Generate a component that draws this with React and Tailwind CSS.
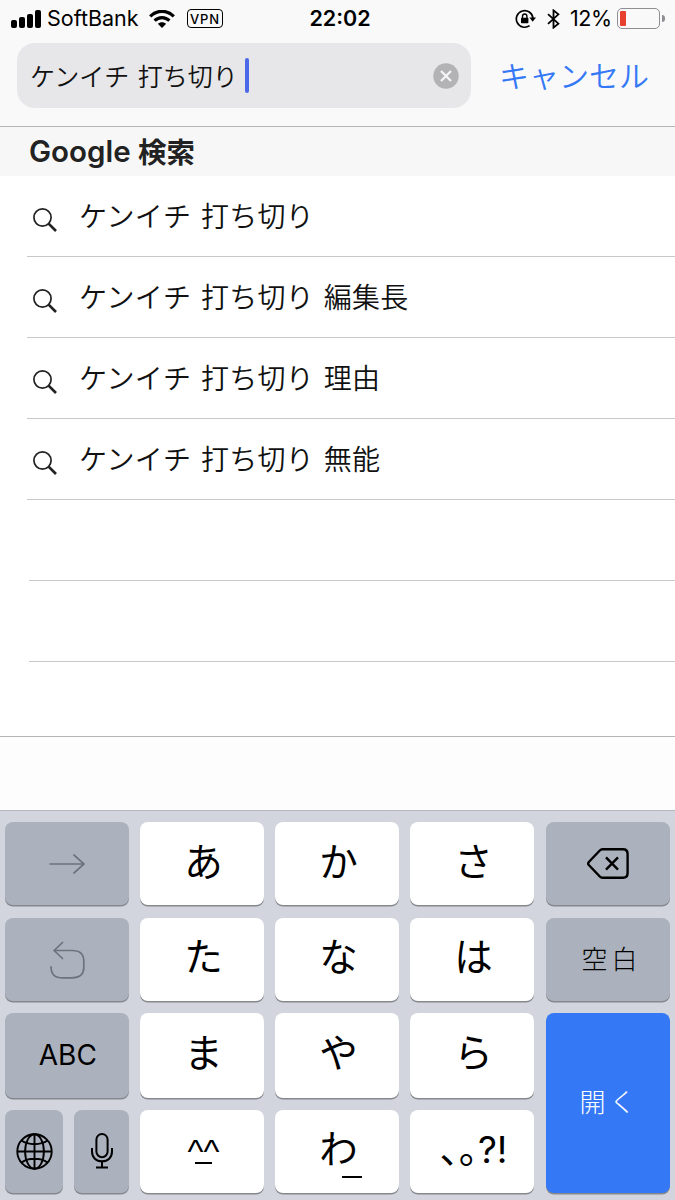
import React from 'react';
import { clsx } from 'clsx';

const suggestions = [
    'ケンイチ 打ち切り',
    'ケンイチ 打ち切り 編集長',
    'ケンイチ 打ち切り 理由',
    'ケンイチ 打ち切り 無能',
];

const signalBars = ['h-2', 'h-[11px]', 'h-[14px]', 'h-[18px]'];

const SearchIcon = () => (
    <svg className="h-6 w-6 shrink-0" viewBox="0 0 24 24" fill="none" stroke="#222">
        <circle cx="9.5" cy="9.5" r="8.6" strokeWidth="1.7" />
        <path d="M15.6 15.6L23 23" strokeWidth="2.7" />
    </svg>
);

const WifiIcon = () => (
    <svg className="h-[18px] w-[26px]" viewBox="0 0 26 18" fill="none" stroke="#000" strokeWidth="3.2">
        <path d="M1.2 6.3C8 -0.4 18 -0.4 24.8 6.3" />
        <path d="M5.6 10.6C9.8 6.5 16.2 6.5 20.4 10.6" />
        <path d="M13 18L8.8 13.8C11.2 11.6 14.8 11.6 17.2 13.8Z" fill="#000" stroke="none" />
    </svg>
);

const RotationLockIcon = () => (
    <svg className="h-5 w-[21px]" viewBox="0 0 21 20" fill="none" stroke="#000" strokeWidth="1.7">
        <path d="M14.6 16.6A8.3 8.3 0 1 1 17.9 9" />
        <path d="M14.4 8.6H21L17.7 12.8Z" fill="#000" stroke="none" />
        <rect x="6" y="8.8" width="7.4" height="5.4" rx="0.8" fill="#000" stroke="none" />
        <path d="M7.5 9V7.2a2.2 2.2 0 0 1 4.4 0V9" strokeWidth="1.4" />
    </svg>
);

const BluetoothIcon = () => (
    <svg className="h-5 w-[13px]" viewBox="0 0 13 20" fill="none" stroke="#000" strokeWidth="1.8">
        <path d="M1 5.2L11.4 14.6L6.5 18.6V1.4L11.4 5.4L1 14.8" />
    </svg>
);

const ArrowIcon = () => (
    <svg className="h-5 w-9" viewBox="0 0 36 20" fill="none" stroke="#6d737d" strokeWidth="1.7">
        <path d="M0.5 10H35M24.5 0.5L35 10L24.5 19.5" />
    </svg>
);

const UndoIcon = () => (
    <svg className="h-[38px] w-[35px]" viewBox="0 0 35 38" fill="none" stroke="#6d737d" strokeWidth="1.7">
        <path d="M13 1L4.2 9.5L13 18" />
        <path d="M4.2 9.5H22C30 9.5 33.8 13.5 33.8 20V26.5C33.8 33 30 36.8 22 36.8H13C5 36.8 1 34 1 25.2" />
    </svg>
);

const DeleteIcon = () => (
    <svg className="h-[31px] w-[42px]" viewBox="0 0 42 31" fill="none" stroke="#000" strokeWidth="2.4" strokeLinejoin="round">
        <path d="M15.5 1.3H36Q40.6 1.3 40.6 6V25Q40.6 29.7 36 29.7H15.5Q13.9 29.7 12.8 28.5L1.8 17Q0.6 15.5 1.8 14L12.8 2.5Q13.9 1.3 15.5 1.3Z" />
        <path d="M19 9.3L31 21.7M31 9.3L19 21.7" />
    </svg>
);

const GlobeIcon = () => (
    <svg className="h-[37px] w-[37px]" viewBox="0 0 37 37" fill="none" stroke="#000" strokeWidth="1.9">
        <circle cx="18.5" cy="18.5" r="17.2" />
        <ellipse cx="18.5" cy="18.5" rx="9.4" ry="17.2" />
        <path d="M18.5 1V36M1 18.5H36M5.6 7.6C12 12.4 25 12.4 31.4 7.6M5.6 29.4C12 24.6 25 24.6 31.4 29.4" />
    </svg>
);

const MicIcon = () => (
    <svg className="h-9 w-[22px]" viewBox="0 0 22 36" fill="none" stroke="#000" strokeWidth="2">
        <rect x="5.4" y="1" width="11.2" height="23.2" rx="5.6" />
        <path d="M1 15V18.5C1 24.7 5.2 28.3 11 28.3S21 24.7 21 18.5V15M11 28.3V34M5 34.4H17" />
    </svg>
);

const Key = ({ variant = 'light', className, children }) => (
    <button
        className={clsx(
            'flex items-center justify-center rounded-lg shadow-[0_1.5px_0_#85888d]',
            variant === 'light' && 'bg-white pb-2 pl-0.5 text-[38.5px]',
            variant === 'dark' && 'bg-[#abb2bd]',
            variant === 'blue' && 'bg-[#3478f6] text-white',
            className
        )}
    >
        {children}
    </button>
);

const StatusBar = () => (
    <div className="grid h-[37px] grid-cols-[1fr_auto_1fr] items-center pl-[11px] pr-[10px] font-['Inter'] text-black">
        <div className="flex items-center">
            <div className="flex items-end gap-[2px]">
                {signalBars.map((height) => (
                    <span key={height} className={clsx('w-[6px] rounded-[2px] bg-black', height)} />
                ))}
            </div>
            <span className="ml-[6px] w-[92px] whitespace-nowrap text-[21.5px]">SoftBank</span>
            <div className="ml-[10px]"><WifiIcon /></div>
            <span className="ml-3 flex h-[19px] w-9 items-center justify-center rounded-[4px] border-[1.5px] border-black pt-px text-[13px] font-medium leading-none tracking-[0.8px]">
                VPN
            </span>
        </div>
        <span className="pl-1 text-[21.5px] font-semibold">22:02</span>
        <div className="flex items-center justify-end">
            <RotationLockIcon />
            <div className="ml-[11px]"><BluetoothIcon /></div>
            <span className="ml-[10px] w-[42px] whitespace-nowrap text-[21.5px] tracking-[-0.4px]">12%</span>
            <div className="ml-[5px] flex h-[21px] w-[43px] rounded-[5px] border-[1.5px] border-[#8e8e93] p-[2px]">
                <span className="w-[6px] rounded-[1px] bg-[#e8402f]" />
            </div>
            <span className="ml-[2px] h-[7px] w-[3px] rounded-r-full bg-[#8e8e93]" />
        </div>
    </div>
);

const SearchBar = () => (
    <div className="flex items-center pl-[17px] pt-[6px]">
        <div className="flex h-[65px] w-[454px] items-center rounded-[18px] bg-[#e7e7e9] pl-[13px] pr-[12px]">
            <span className="w-[215px] whitespace-pre text-[25px] font-[350] text-[#111] [word-spacing:3px]">ケンイチ 打ち切り</span>
            <span className="h-[35px] w-[3.5px] rounded-full bg-[#4a68e8]" />
            <svg className="ml-auto h-[26px] w-[26px]" viewBox="0 0 26 26">
                <circle cx="13" cy="13" r="12.7" fill="#b3b3b5" />
                <path d="M8 8L18 18M18 8L8 18" stroke="#f4f4f5" strokeWidth="2.4" />
            </svg>
        </div>
        <span className="ml-7 whitespace-nowrap pb-0.5 text-[30px] font-[350] text-[#3478f6]">キャンセル</span>
    </div>
);

const Keyboard = () => (
    <div className="grid flex-1 grid-cols-[repeat(5,124px)] grid-rows-[83px_83px_84.5px_82.5px] gap-x-[11.05px] gap-y-[12.5px] border-t border-[#b4b7bd] bg-[#d2d5dd] pl-[5.35px] pt-[11px] text-black">
        <Key variant="dark"><ArrowIcon /></Key>
        <Key>あ</Key>
        <Key>か</Key>
        <Key>さ</Key>
        <Key variant="dark"><DeleteIcon /></Key>

        <Key variant="dark" className="pt-px"><UndoIcon /></Key>
        <Key>た</Key>
        <Key>な</Key>
        <Key>は</Key>
        <Key variant="dark" className="gap-1 pb-1 pl-1 text-[26px] font-light">
            <span>空</span>
            <span>白</span>
        </Key>

        <Key variant="dark" className="pl-px font-['Inter'] text-[28px]">ABC</Key>
        <Key>ま</Key>
        <Key>や</Key>
        <Key>ら</Key>
        <Key variant="blue" className="row-span-2 gap-1 pb-1 text-[26px] font-light">
            <span>開</span>
            <span>く</span>
        </Key>

        <div className="grid grid-cols-[57.5px_55.5px] gap-[11px]">
            <Key variant="dark"><GlobeIcon /></Key>
            <Key variant="dark"><MicIcon /></Key>
        </div>
        <Key className="flex-col">
            <span className="h-[32px] font-['Liberation_Sans'] text-[34px] leading-[42px]">^^</span>
            <span className="h-[2px] w-[17px] bg-black" />
        </Key>
        <Key>
            <span className="relative">
                わ
                <span className="absolute -bottom-[2px] -right-[4px] h-[2px] w-5 bg-black" />
            </span>
        </Key>
        <Key className="whitespace-nowrap">
            <span className="flex items-baseline">
                <span className="[font-feature-settings:'halt']">、。</span>
                <span className="font-['Inter'] text-[37px]">?!</span>
            </span>
        </Key>
    </div>
);

const App = () => {
    return (
        <div className="flex h-[1200px] w-[675px] flex-col overflow-hidden bg-white font-['Noto_Sans_CJK_JP',sans-serif]">
            <header className="h-[127px] border-b border-[#b5b5b8] bg-[#f9f9f9]">
                <StatusBar />
                <SearchBar />
            </header>

            <h2 className="flex h-[49px] items-center bg-[#f7f7f7] pl-[29px] text-[28.5px] font-semibold text-[#222]">
                <span className="w-[102px] text-[29.5px] font-['Inter']">Google</span>
                <span className="ml-[7px] font-bold">検索</span>
            </h2>

            {/* Suggestions */}
            <ul className="h-[561px] overflow-hidden border-b border-[#b5b5b8]">
                {suggestions.map((text) => (
                    <li key={text} className="ml-[27px] flex h-[81px] items-center border-b border-[#c8c7cc] pl-[6px]">
                        <div className="mt-[7px]"><SearchIcon /></div>
                        <span className="ml-[22px] pb-0.5 text-[28px] font-[350] tracking-[0.3px] text-[#111] [word-spacing:3px]">{text}</span>
                    </li>
                ))}
                <li className="ml-[29px] h-[81px] border-b border-[#c8c7cc]" />
                <li className="ml-[29px] h-[81px] border-b border-[#c8c7cc]" />
            </ul>

            {/* Candidate bar */}
            <div className="h-[73px] bg-[#fdfdfe]" />

            <Keyboard />
        </div>
    );
};

export default App;
